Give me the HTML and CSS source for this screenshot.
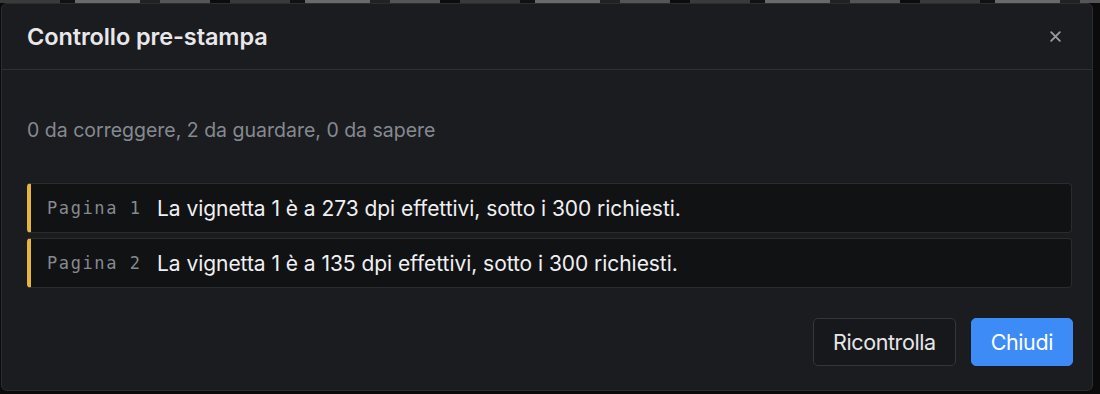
FILE: index.html
```html
<!DOCTYPE html>
<html lang="it">
<head>
<meta charset="utf-8">
<title>Controllo pre-stampa</title>
<link rel="stylesheet" href="styles.css">
</head>
<body>
<div class="backdrop">
  <div class="strip"></div>
  <div class="modal">
    <div class="modal-header">
      <h2 class="modal-title">Controllo pre-stampa</h2>
      <button class="close" aria-label="Chiudi">
        <svg width="13" height="13" viewBox="0 0 12 12"><path d="M2 2 L10 10 M10 2 L2 10" stroke="currentColor" stroke-width="1.7" stroke-linecap="round"/></svg>
      </button>
    </div>
    <div class="modal-body">
      <p class="summary">0 da correggere, 2 da guardare, 0 da sapere</p>
      <ul class="issues">
        <li class="issue"><span class="page">Pagina 1</span><span class="msg">La vignetta 1 è a 273 dpi effettivi, sotto i 300 richiesti.</span></li>
        <li class="issue"><span class="page">Pagina 2</span><span class="msg">La vignetta 1 è a 135 dpi effettivi, sotto i 300 richiesti.</span></li>
      </ul>
    </div>
    <div class="modal-footer">
      <button class="btn btn-secondary">Ricontrolla</button>
      <button class="btn btn-primary">Chiudi</button>
    </div>
  </div>
</div>
</body>
</html>
```

FILE: styles.css
```css
* { box-sizing: border-box; }
html, body { margin: 0; padding: 0; }
body {
  background: #0b0b0c;
  font-family: Inter, "Noto Sans", sans-serif;
  width: 1100px;
  height: 394px;
  overflow: hidden;
}
.backdrop {
  position: relative;
  height: 394px;
  padding: 3px 7px 0 1px;
}
.strip {
  position: absolute;
  left: 0; top: 0; right: 0;
  height: 3px;
  background: repeating-linear-gradient(90deg, #3a3a3a 0 60px, #111 60px 75px, #6a6a6a 75px 140px, #222 140px 160px, #555 160px 210px, #0c0c0c 210px 230px);
}
.modal {
  position: relative;
  height: 388px;
  background: #1b1c1f;
  border: 1px solid #2b2d31;
  border-radius: 6px;
  display: flex;
  flex-direction: column;
}
.modal-header {
  height: 66px;
  display: flex;
  align-items: center;
  justify-content: space-between;
  padding: 0 30px 0 25px;
  border-bottom: 1px solid #2e3034;
}
.modal-title {
  margin: 0;
  font-size: 23.5px;
  font-weight: 600;
  color: #e8e8ea;
  letter-spacing: -0.1px;
}
.close {
  background: none;
  border: 0;
  padding: 0;
  color: #9a9ca1;
  display: flex;
  cursor: pointer;
}
.modal-body {
  padding: 48px 20px 0 25px;
}
.summary {
  margin: 0 0 41px;
  font-size: 19.5px;
  line-height: 24px;
  color: #858a91;
  letter-spacing: 0;
}
.issues {
  list-style: none;
  margin: 0;
  padding: 0;
  display: flex;
  flex-direction: column;
  gap: 5px;
}
.issue {
  height: 50px;
  display: flex;
  align-items: center;
  background: #111214;
  border: 1px solid #2a2c30;
  border-left: 4px solid #e5b53f;
  border-radius: 4px;
  padding-left: 16px;
}
.page {
  font-family: "DejaVu Sans Mono", "Liberation Mono", monospace;
  font-size: 17px;
  letter-spacing: 1.6px;
  color: #868a90;
  width: 110px;
}
.msg {
  font-size: 21px;
  color: #f0f0f2;
  letter-spacing: -0.05px;
}
.modal-footer {
  margin-top: auto;
  display: flex;
  justify-content: flex-end;
  gap: 15px;
  padding: 0 19px 24px;
}
.btn {
  height: 48px;
  font-family: Inter, "Noto Sans", sans-serif;
  font-size: 21.5px;
  border-radius: 5px;
  padding: 0 19px;
  cursor: pointer;
  letter-spacing: -0.4px;
}
.btn-secondary {
  background: #17181b;
  color: #e6e6e8;
  border: 1px solid #34363a;
}
.btn-primary {
  background: #3d8bf7;
  color: #ffffff;
  border: 1px solid #3d8bf7;
}
```
